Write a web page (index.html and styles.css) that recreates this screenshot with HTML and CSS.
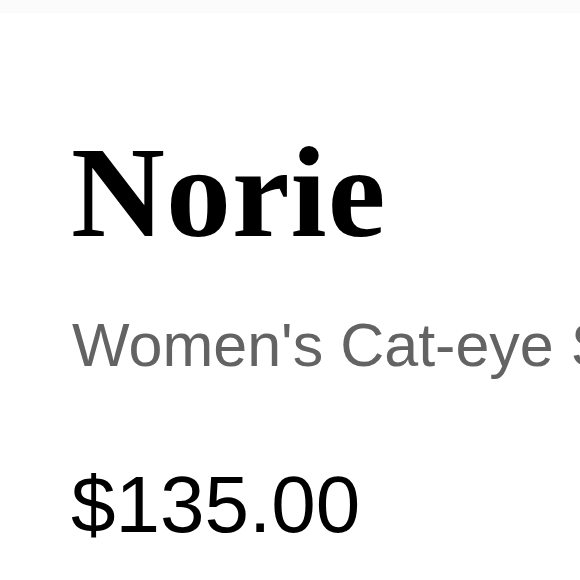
FILE: index.html
```html
<!DOCTYPE html>
<html>
<head>
<meta charset="utf-8">
<link rel="stylesheet" href="styles.css">
</head>
<body>
<div class="topbar"></div>
<main class="product">
  <h1 class="name">Norie</h1>
  <p class="subtitle">Women's Cat-eye Sunglasses</p>
  <p class="price">$135.00</p>
</main>
</body>
</html>
```
FILE: styles.css
```css
html, body {
  margin: 0;
  padding: 0;
  background: #ffffff;
  overflow: hidden;
}
.topbar {
  height: 13px;
  background: #fbfbfb;
}
.product {
  padding: 114px 0 0 71px;
  display: flex;
  flex-direction: column;
}
.name {
  margin: 0;
  font-family: "Liberation Serif", "Times New Roman", serif;
  font-weight: 700;
  font-size: 130px;
  letter-spacing: 1px;
  line-height: 1;
  color: #000;
}
.subtitle {
  margin: 58px 0 0 1px;
  font-family: "Liberation Sans", Arial, sans-serif;
  font-size: 61px;
  line-height: 1;
  color: #636363;
  white-space: nowrap;
}
.price {
  margin: 89px 0 0 0;
  font-family: "Liberation Sans", Arial, sans-serif;
  font-size: 80px;
  line-height: 1;
  color: #000;
}
```
